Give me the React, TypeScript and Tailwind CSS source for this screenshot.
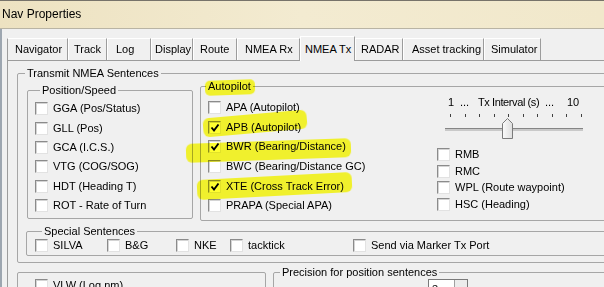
import React from 'react';

const tabs = [
  { label: 'Navigator', w: 'w-[61px]', pl: 'pl-[7px]', first: true },
  { label: 'Track', w: 'w-[39px]', pl: 'pl-[5px]' },
  { label: 'Log', w: 'w-[44px]', pl: 'pl-[8px]' },
  { label: 'Display', w: 'w-[42px]', pl: 'pl-[3px]' },
  { label: 'Route', w: 'w-[44px]', pl: 'pl-[6px]' },
  { label: 'NMEA Rx', w: 'w-[63px]', pl: 'pl-[7px]' },
  { label: 'NMEA Tx', w: 'w-[55px]', pl: 'pl-[4px]', active: true },
  { label: 'RADAR', w: 'w-[48px]', pl: 'pl-[5px]' },
  { label: 'Asset tracking', w: 'w-[81px]', pl: 'pl-[8px]' },
  { label: 'Simulator', w: 'w-[57px]', pl: 'pl-[6px]' },
];

const positionSpeed = [
  'GGA (Pos/Status)',
  'GLL (Pos)',
  'GCA (I.C.S.)',
  'VTG (COG/SOG)',
  'HDT (Heading T)',
  'ROT - Rate of Turn',
];

const autopilot = [
  { label: 'APA (Autopilot)' },
  { label: 'APB (Autopilot)', on: true },
  { label: 'BWR (Bearing/Distance)', on: true },
  { label: 'BWC (Bearing/Distance GC)' },
  { label: 'XTE (Cross Track Error)', on: true },
  { label: 'PRAPA (Special APA)' },
];

const others = ['RMB', 'RMC', 'WPL (Route waypoint)', 'HSC (Heading)'];

const Check = ({ on }: { on?: boolean }) => (
  <span className="relative block w-[13px] h-[13px] shrink-0 bg-white border border-[#8b8b8b] border-r-[#e2e2e2] border-b-[#e2e2e2] shadow-[inset_1px_1px_0_#d4d4d4]">
    {on && (
      <svg className="absolute left-[1px] top-[1px]" width="10" height="10" viewBox="0 0 10 10">
        <path d="M1.5 4.5 L4 7.5 L8.5 1.5" fill="none" stroke="#000" strokeWidth="1.9" />
      </svg>
    )}
  </span>
);

const Item = ({ label, on, className = '' }: { label: string; on?: boolean; className?: string }) => (
  <div className={`flex items-center gap-[5px] whitespace-nowrap ${className}`}>
    <Check on={on} />
    <span>{label}</span>
  </div>
);

const Legend = ({ children, className = '' }: { children: React.ReactNode; className?: string }) => (
  <legend className={`px-[2px] leading-[13px] ${className}`}>{children}</legend>
);

export default function App() {
  return (
    <div className="relative w-[604px] h-[287px] overflow-hidden bg-[#f0f0f0] text-[11px] leading-[13px] text-black font-['Liberation_Sans',Arial,sans-serif]">
      {/* title bar */}
      <div className="h-[29px] flex items-center pl-[2px] border-t border-[#77736a] border-b border-b-[#b9b4a4] bg-gradient-to-r from-[#ede2c1] via-[#f3ebd1] to-[#f1e8cb] text-[12px]">
        Nav Properties
      </div>

      <div className="h-[258px] border-l-2 border-[#9da6b0] pl-[5px] pt-[9px]">
        {/* tabs */}
        <div className="flex items-end h-[22px]">
          {tabs.map((t) =>
            t.active ? (
              <div
                key={t.label}
                className={`relative z-10 ${t.w} ${t.pl} h-[25px] -mb-[1px] flex items-center bg-[#f0f0f0] border-t border-l border-white border-r border-r-[#9c9c9c] whitespace-nowrap`}
              >
                {t.label}
              </div>
            ) : (
              <div
                key={t.label}
                className={`${t.w} ${t.pl} h-[22px] flex items-center border-t border-white border-r border-r-[#9c9c9c] whitespace-nowrap ${t.first ? 'border-l border-l-[#9c9c9c]' : 'border-l border-l-white'}`}
              >
                {t.label}
              </div>
            )
          )}
        </div>

        {/* tab page */}
        <div className="w-[640px] h-[240px] border-t border-l border-[#9c9c9c] pl-[9px]">
          <fieldset className="mt-[6px] w-[620px] border border-[#a6a6a6] rounded-[2px] pb-[6px]">
            <Legend className="ml-[7px]">Transmit NMEA Sentences</Legend>

            <div className="flex items-start pl-[9px]">
              <fieldset className="mt-[4px] w-[166px] h-[135px] border border-[#a6a6a6] rounded-[2px] pl-[7px] pt-[2px]">
                <Legend className="ml-[5px]">Position/Speed</Legend>
                {positionSpeed.map((l) => (
                  <Item key={l} label={l} className="h-[19.4px]" />
                ))}
              </fieldset>

              <fieldset className="ml-[7px] w-[420px] h-[141px] border border-[#a6a6a6] rounded-[2px]">
                <Legend className="ml-[5px]">Autopilot</Legend>
                <div className="flex">
                  <div className="w-[236px] pl-[7px] pt-[5px]">
                    {autopilot.map((a) => (
                      <Item key={a.label} label={a.label} on={a.on} className="h-[19.6px]" />
                    ))}
                  </div>

                  <div className="pt-[3px]">
                    <div className="flex pl-[11px] whitespace-nowrap">
                      <span className="w-[12px]">1</span>
                      <span className="w-[18px]">...</span>
                      <span className="w-[67px] tracking-[-0.4px]">Tx Interval (s)</span>
                      <span className="w-[22px]">...</span>
                      <span>10</span>
                    </div>
                    <div className="ml-[13px] mt-[5px] w-[132px] h-[3px] flex justify-between">
                      {Array.from({ length: 10 }).map((_, i) => (
                        <span key={i} className="w-[1px] h-[3px] bg-[#404040]" />
                      ))}
                    </div>
                    <div className="relative mt-[1px] h-[21px]">
                      <div className="ml-[8px] pt-[10px]">
                        <div className="w-[138px] h-[3px] bg-[#c9c9c9] border-t border-[#858585]" />
                      </div>
                      <svg className="absolute left-[65px] top-0" width="11" height="21" viewBox="0 0 11 21">
                        <defs>
                          <linearGradient id="th" x1="0" y1="0" x2="1" y2="0">
                            <stop offset="0" stopColor="#fbfbfb" />
                            <stop offset="1" stopColor="#dedede" />
                          </linearGradient>
                        </defs>
                        <path d="M0.5 5.5 L5.5 0.5 L10.5 5.5 L10.5 20.5 L0.5 20.5 Z" fill="url(#th)" stroke="#7b7b7b" />
                      </svg>
                    </div>
                    <div className="mt-[7px]">
                      {others.map((o) => (
                        <Item key={o} label={o} className="h-[16.7px]" />
                      ))}
                    </div>
                  </div>
                </div>
              </fieldset>
            </div>

            <fieldset className="mt-[4px] ml-[8px] w-[600px] h-[31px] border border-[#a6a6a6] rounded-[2px] pl-[8px]">
              <Legend className="ml-[7px]">Special Sentences</Legend>
              <div className="flex h-[14px] items-center">
                <Item label="SILVA" className="w-[72px]" />
                <Item label="B&G" className="w-[69px]" />
                <Item label="NKE" className="w-[54px]" />
                <Item label="tacktick" className="w-[123px]" />
                <Item label="Send via Marker Tx Port" />
              </div>
            </fieldset>
          </fieldset>

          <div className="flex items-start">
            <fieldset className="mt-[9px] w-[249px] h-[40px] border border-[#a6a6a6] rounded-[2px] pl-[17px] pt-[5px]">
              <Item label="VLW (Log nm)" className="h-[14px]" />
            </fieldset>
            <fieldset className="ml-[7px] mt-[3px] w-[360px] h-[40px] border border-[#a6a6a6] rounded-[2px]">
              <Legend className="ml-[6px]">Precision for position sentences</Legend>
              <div className="ml-[154px] w-[40px] h-[21px] flex border border-[#7a7a7a] bg-white">
                <span className="w-[25px] pl-[3px] pt-[3px]">3</span>
                <span className="flex-1 border-l border-[#a0a0a0] bg-[#ececec]" />
              </div>
            </fieldset>
          </div>
        </div>
      </div>

      {/* highlighter marks */}
      <div className="absolute left-[205px] top-[80px] w-[50px] h-[15px] rounded-[5px] bg-[#ffff30] mix-blend-multiply -rotate-2 blur-[0.5px]" />
      <div className="absolute left-[203px] top-[114px] w-[104px] h-[19px] rounded-[6px] bg-[#ffff30] mix-blend-multiply -rotate-[5deg] blur-[0.5px]" />
      <div className="absolute left-[186px] top-[141px] w-[165px] h-[19px] rounded-[6px] bg-[#ffff30] mix-blend-multiply -rotate-2 blur-[0.5px]" />
      <div className="absolute left-[197px] top-[176px] w-[155px] h-[20px] rounded-[6px] bg-[#ffff30] mix-blend-multiply -rotate-3 blur-[0.5px]" />
    </div>
  );
}
